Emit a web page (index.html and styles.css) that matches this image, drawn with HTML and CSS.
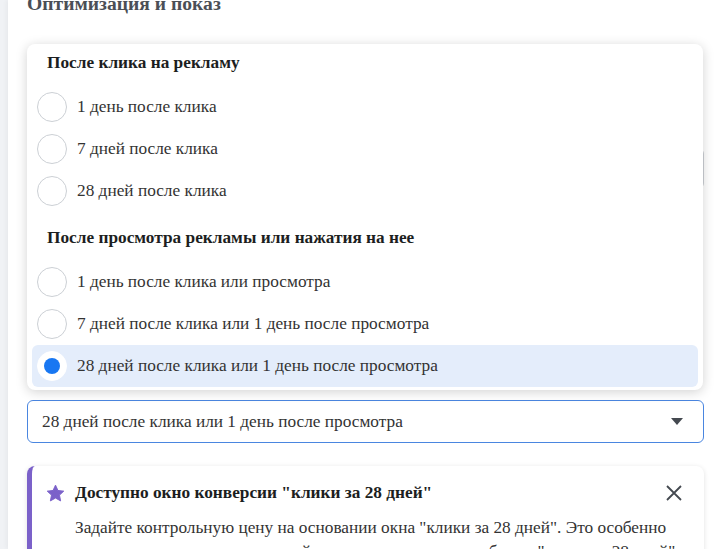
FILE: index.html
```
<!DOCTYPE html>
<html lang="ru">
<head>
    <meta charset="UTF-8">
    <meta name="viewport" content="width=device-width, initial-scale=1.0">
    <title>Оптимизация и показ</title>
    <link rel="stylesheet" href="styles.css">
</head>
<body>
    <div class="page">
        <h2 class="section-title">Оптимизация и показ</h2>

        <div class="hidden-fields">
            <div class="field-box"></div>
        </div>

        <label class="field-label">Окно атрибуции</label>
        <div class="select-box">
            <span>28 дней после клика или 1 день после просмотра</span>
            <span class="caret"></span>
        </div>

        <div class="notice">
            <div class="notice-head">
                <svg class="star" viewBox="0 0 20 20" width="19" height="19">
                    <path d="M10 1.2l2.6 5.6 6.1.7-4.5 4.2 1.2 6.1L10 14.8l-5.4 3 1.2-6.1L1.3 7.5l6.1-.7z" fill="#7b61c9" stroke="#7b61c9" stroke-width="1" stroke-linejoin="round"/>
                </svg>
                <span class="notice-title">Доступно окно конверсии "клики за 28 дней"</span>
                <svg class="close" viewBox="0 0 20 20" width="20" height="20">
                    <path d="M3 3L17 17M17 3L3 17" stroke="#444950" stroke-width="1.8" fill="none"/>
                </svg>
            </div>
            <p class="notice-text">Задайте контрольную цену на основании окна "клики за 28 дней". Это особенно полезно для рекламы, в которой используется окно атрибуции "клики за 28 дней". Кроме того</p>
        </div>

        <!-- dropdown menu -->
        <div class="menu">
            <div class="menu-group">После клика на рекламу</div>
            <div class="option"><span class="radio"></span>1 день после клика</div>
            <div class="option"><span class="radio"></span>7 дней после клика</div>
            <div class="option"><span class="radio"></span>28 дней после клика</div>
            <div class="menu-group second">После просмотра рекламы или нажатия на нее</div>
            <div class="option"><span class="radio"></span>1 день после клика или просмотра</div>
            <div class="option"><span class="radio"></span>7 дней после клика или 1 день после просмотра</div>
            <div class="option selected"><span class="radio"></span>28 дней после клика или 1 день после просмотра</div>
        </div>
    </div>
</body>
</html>
```

FILE: styles.css
```
body{
    margin: 0;
    background-color: #f0f2f5;
    font-family: "Liberation Serif", "Times New Roman", serif;
    color: #1c1e21;
    overflow: hidden;
}
.page{
    position: relative;
    display: flow-root;
    margin-left: 8px;
    height: 549px;
    overflow: hidden;
    background-color: #fff;
    padding: 0 18px 0 19px;
    box-shadow: -2px 0 4px rgba(0,0,0,0.04);
}
.section-title{
    margin: -8px 0 0 0;
    font-size: 19.6px;
    line-height: 24px;
    color: #4b4f56;
}
.hidden-fields{
    padding-top: 132px;
    height: 207px;
}
.field-box{
    height: 39px;
    border: 1px solid #ccd0d5;
    border-radius: 6px;
}
.field-label{
    display: block;
    font-size: 17px;
    font-weight: bold;
    line-height: 20px;
    margin-top: 14px;
    margin-left: 70px;
}
.select-box{
    margin-top: 11px;
    height: 41px;
    border: 1px solid #4a86e0;
    border-radius: 6px;
    padding: 0 20px 0 14px;
    display: flex;
    align-items: center;
    justify-content: space-between;
    font-size: 17.3px;
    color: #333;
}
.caret{
    width: 0;
    height: 0;
    border-left: 6px solid transparent;
    border-right: 6px solid transparent;
    border-top: 7px solid #444950;
}
.notice{
    margin-top: 23px;
    border-left: 5px solid #7b61c9;
    border-radius: 8px;
    box-shadow: 0 1px 5px rgba(0,0,0,0.12);
    padding: 15px 20px 20px 14px;
}
.notice-head{
    display: flex;
    align-items: center;
    height: 24px;
}
.star{
    margin-right: 10px;
}
.notice-title{
    flex: 1;
    font-weight: bold;
    font-size: 17.3px;
}
.notice-text{
    margin: 11px 0 0 29px;
    font-size: 17.3px;
    line-height: 24px;
    color: #333;
}
.menu{
    position: absolute;
    top: 44px;
    left: 19px;
    width: 666px;
    padding: 0 5px 3px;
    background-color: #fff;
    border-radius: 8px;
    box-shadow: 0 2px 12px rgba(0,0,0,0.18);
}
.menu-group{
    padding: 9px 15px 13px;
    font-weight: bold;
    font-size: 17.3px;
    line-height: 20px;
}
.menu-group.second{
    padding-top: 16px;
    padding-bottom: 13px;
}
.option{
    display: flex;
    align-items: center;
    height: 42px;
    padding-left: 5px;
    font-size: 17.3px;
    color: #333;
    border-radius: 6px;
}
.radio{
    box-sizing: border-box;
    width: 30px;
    height: 30px;
    border: 1px solid #ccd0d5;
    border-radius: 50%;
    background-color: #fff;
    margin-right: 10px;
    position: relative;
}
.option.selected{
    background-color: #e4edfb;
}
.option.selected .radio{
    border-color: #fff;
}
.option.selected .radio::after{
    content: "";
    position: absolute;
    left: 6px;
    top: 6px;
    width: 16px;
    height: 16px;
    border-radius: 50%;
    background-color: #1877f2;
}
```
